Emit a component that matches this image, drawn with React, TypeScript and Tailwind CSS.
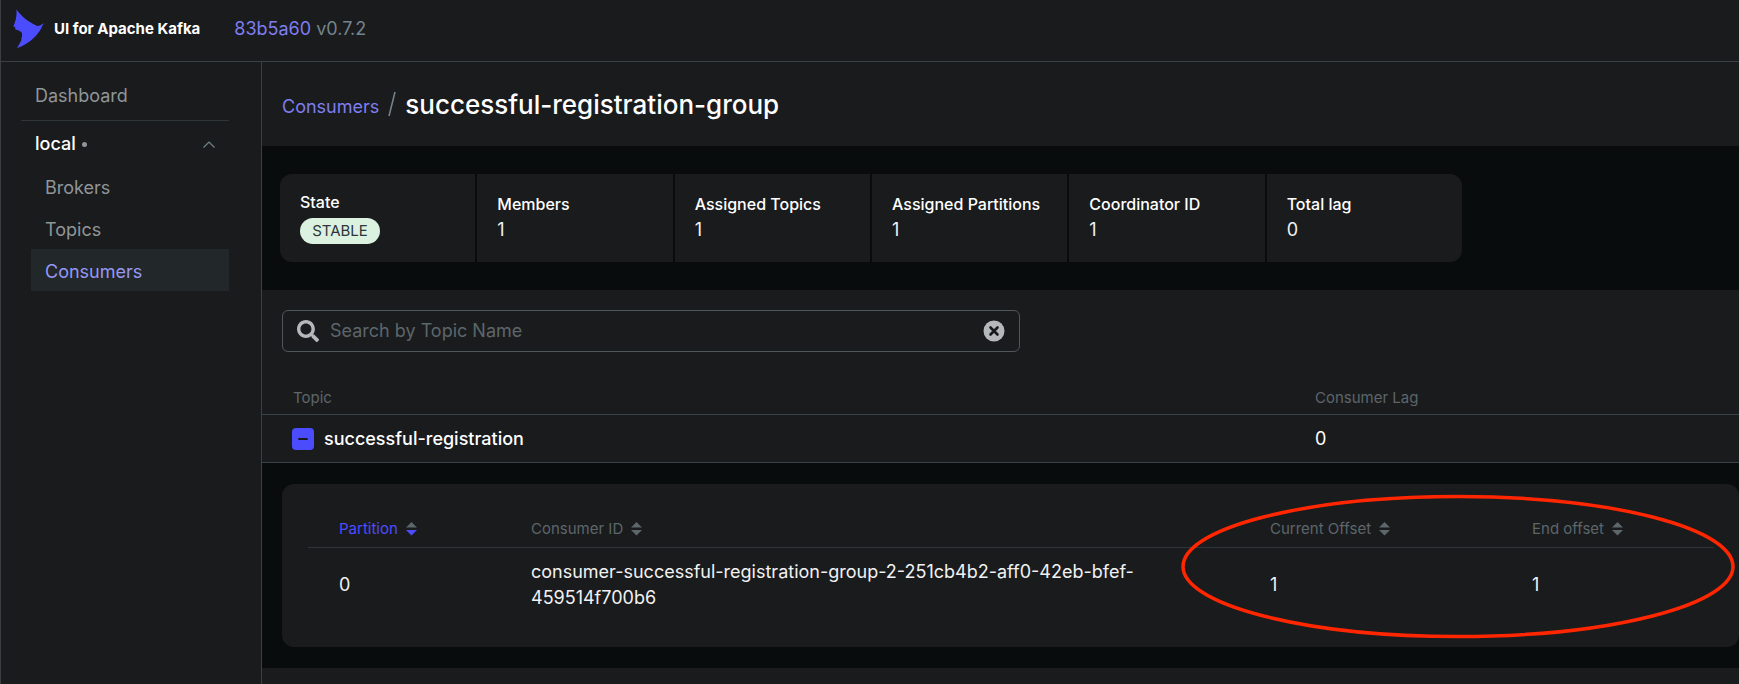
import { useState } from "react";
import clsx from "clsx";

const navItems = ["Brokers", "Topics", "Consumers"];

const metrics = [
  { label: "Members", value: "1" },
  { label: "Assigned Topics", value: "1" },
  { label: "Assigned Partitions", value: "1" },
  { label: "Coordinator ID", value: "1" },
  { label: "Total lag", value: "0" },
];

const partitions = [
  {
    partition: 0,
    consumerId:
      "consumer-successful-registration-group-2-251cb4b2-aff0-42eb-bfef-459514f700b6",
    currentOffset: 1,
    endOffset: 1,
  },
];

function Logo() {
  return (
    <svg width="32" height="40" viewBox="0 0 32 40" aria-hidden="true">
      <path
        d="M3.500 0.500C8 7 16 13.500 24.300 17C27 16.800 29 15.500 31 14C29.500 16.500 28.500 18.500 27 21.500C22 29 14 36 4 39L7.500 33C9 31 7.800 29.500 9 27.500V24C7.500 22 5 21 2.500 20.500L2 18L0.300 17.500C2.500 13 4 7 3.500 0.500Z"
        fill="#4c4cff"
      />
    </svg>
  );
}

function SearchIcon() {
  return (
    <svg width="22" height="22" viewBox="0 0 512 512" fill="#b4b8ba" aria-hidden="true">
      <path d="M505 442.700L405.300 343c-4.500-4.500-10.600-7-17-7H372c27.600-35.300 44-79.700 44-128C416 93.100 322.900 0 208 0S0 93.100 0 208s93.100 208 208 208c48.300 0 92.700-16.400 128-44v16.300c0 6.400 2.500 12.500 7 17l99.700 99.700c9.400 9.400 24.600 9.400 33.900 0l28.300-28.300c9.400-9.400 9.400-24.600.1-34zM208 336c-70.700 0-128-57.200-128-128 0-70.700 57.200-128 128-128 70.700 0 128 57.200 128 128 0 70.700-57.200 128-128 128z" />
    </svg>
  );
}

function ClearIcon() {
  return (
    <svg width="22" height="22" viewBox="0 0 22 22" aria-hidden="true">
      <circle cx="11" cy="11" r="10.500" fill="#b4b8ba" />
      <path d="M7.500 7.500l7 7M14.500 7.500l-7 7" stroke="#171a1c" strokeWidth="2.600" strokeLinecap="round" />
    </svg>
  );
}

interface SortHeaderProps {
  label: string;
  active?: boolean;
}

function SortHeader({ label, active }: SortHeaderProps) {
  return (
    <button
      type="button"
      className={clsx(
        "flex items-center gap-2 whitespace-nowrap",
        active ? "text-[#4c4cff]" : "text-[#5c666b]",
      )}
    >
      {label}
      <svg width="11" height="14" viewBox="0 0 11 14" aria-hidden="true">
        <path d="M5.500 0L11 5.500H0Z" fill="#5c666b" />
        <path d="M0 8H11L5.500 13.500Z" fill={active ? "#4c4cff" : "#5c666b"} />
      </svg>
    </button>
  );
}

function Sidebar() {
  return (
    <aside className="w-[261px] shrink-0 border-r border-[#374146] pt-2 pr-8 pl-5">
      <nav>
        <a
          href="#dashboard"
          className="flex h-[51px] items-center border-b border-[#2f3639] pt-0.5 pl-3.5 text-lg text-[#8f9698]"
        >
          Dashboard
        </a>
        <button
          type="button"
          className="flex h-11 w-full items-center px-3.5 pt-0.5 text-lg font-medium text-white"
        >
          local
          <span className="ml-1.5 size-[5px] rounded-full bg-[#8f9698]" />
          <svg
            className="ml-auto"
            width="12"
            height="7"
            viewBox="0 0 12 7"
            fill="none"
            stroke="#73848c"
            strokeWidth="1.200"
            aria-hidden="true"
          >
            <path d="M0.500 6.500L6 1L11.500 6.500" />
          </svg>
        </button>
        <ul className="ml-2.5">
          {navItems.map((item) => (
            <li key={item}>
              <a
                href={`#${item.toLowerCase()}`}
                className={clsx(
                  "flex h-[42px] items-center pt-1 pl-3.5 text-lg",
                  item === "Consumers"
                    ? "bg-[#22282a] text-[#9797f4]"
                    : "text-[#8f9698]",
                )}
              >
                {item}
              </a>
            </li>
          ))}
        </ul>
      </nav>
    </aside>
  );
}

function Metrics() {
  return (
    <section className="bg-[#090c0d] px-[18px] py-7">
      <dl className="grid max-w-[1182px] grid-cols-6 gap-0.5 overflow-hidden rounded-xl">
        <div className="flex h-[88px] flex-col justify-center bg-[#1a1b1d] px-5">
          <dt className="leading-5 font-medium text-white">State</dt>
          <dd className="mt-1.5 flex h-[26px] w-20 items-center justify-center rounded-full bg-[#dbf2e1] text-[15px] text-[#2f3639]">
            STABLE
          </dd>
        </div>
        {metrics.map(({ label, value }) => (
          <div key={label} className="flex h-[88px] flex-col justify-center bg-[#1a1b1d] px-5">
            <dt className="leading-5 font-medium text-white">{label}</dt>
            <dd className="mt-1 text-lg leading-6 text-[#f1f2f3]">{value}</dd>
          </div>
        ))}
      </dl>
    </section>
  );
}

function PartitionTable() {
  return (
    <div className="relative h-[163px] rounded-xl bg-[#1a1b1d] pt-7 pr-[25px] pl-[26px]">
      <table className="w-full table-fixed text-left">
        <thead>
          <tr className="h-9 border-b border-[#2f3639] text-[15px] [&>th]:pl-[31px] [&>th]:font-normal">
            <th className="w-48">
              <SortHeader label="Partition" active />
            </th>
            <th>
              <SortHeader label="Consumer ID" />
            </th>
            <th className="w-[262px]">
              <SortHeader label="Current Offset" />
            </th>
            <th className="w-[213px]">
              <SortHeader label="End offset" />
            </th>
          </tr>
        </thead>
        <tbody>
          {partitions.map((row) => (
            <tr
              key={row.partition}
              className="h-[74px] text-lg leading-[26px] text-[#f1f2f3] [&>td]:pl-[31px]"
            >
              <td>{row.partition}</td>
              <td className="pr-8">{row.consumerId}</td>
              <td>{row.currentOffset}</td>
              <td>{row.endOffset}</td>
            </tr>
          ))}
        </tbody>
      </table>
      {/* Red marker around the offset columns */}
      <svg
        className="pointer-events-none absolute top-2.5 right-1"
        width="554"
        height="145"
        viewBox="0 0 554 145"
        fill="none"
        aria-hidden="true"
      >
        <ellipse cx="277" cy="72.500" rx="275" ry="70" stroke="#ff2600" strokeWidth="3.500" />
      </svg>
    </div>
  );
}

function TopicsTable() {
  const [open, setOpen] = useState(true);

  return (
    <table className="mt-6 w-full table-fixed text-left">
      <thead>
        <tr className="h-[38px] border-b border-[#374146] text-[15px] text-[#5c666b] [&>th]:pt-1.5 [&>th]:font-normal">
          <th className="pl-[31px]">Topic</th>
          <th className="w-[456px] pl-8">Consumer Lag</th>
        </tr>
      </thead>
      <tbody>
        <tr className="h-12 border-b border-[#374146] text-lg text-white">
          <td className="pt-0.5 pl-[30px]">
            <div className="flex items-center gap-2.5 font-medium">
              <button
                type="button"
                aria-label="Toggle partitions"
                aria-expanded={open}
                onClick={() => setOpen(!open)}
                className="flex size-[22px] items-center justify-center rounded-sm bg-[#4c4cff]"
              >
                <span className="h-0.5 w-2.5 rounded-full bg-[#171a1c]" />
              </button>
              successful-registration
            </div>
          </td>
          <td className="pt-0.5 pl-8">0</td>
        </tr>
        {open && (
          <tr>
            <td colSpan={2} className="bg-[#090c0d] py-[21px] pl-5">
              <PartitionTable />
            </td>
          </tr>
        )}
      </tbody>
    </table>
  );
}

export default function App() {
  const [search, setSearch] = useState("");

  return (
    <div className="flex min-h-screen flex-col border-l border-[#3b3f41] bg-[#1a1b1d] font-['Inter',sans-serif]">
      <header className="flex h-[62px] items-center border-b border-[#374146] pb-[3px] pl-3">
        <Logo />
        <a href="#home" className="ml-[9px] text-[15px] font-bold text-white">
          UI for Apache Kafka
        </a>
        <p className="ml-[34px] text-lg text-[#73848c]">
          <a href="#commit" className="text-[#7e7ef1]">
            83b5a60
          </a>{" "}
          v0.7.2
        </p>
      </header>

      <div className="flex flex-1">
        <Sidebar />
        <main className="min-w-0 flex-1">
          <div className="flex h-[84px] items-center pl-5">
            <a href="#consumers" className="pt-1.5 text-lg text-[#7e7ef1]">
              Consumers
            </a>
            <svg className="mx-[9px]" width="8" height="26" viewBox="0 0 8 26" aria-hidden="true">
              <path d="M1 25L7 1" stroke="#73848c" strokeWidth="1.500" />
            </svg>
            <h1 className="text-[26px] font-medium text-white">successful-registration-group</h1>
          </div>

          <Metrics />

          <div className="px-5 pt-5">
            <label className="flex h-[42px] max-w-[738px] items-center rounded-md border border-[#4f5759] px-3.5">
              <SearchIcon />
              <input
                type="text"
                aria-label="Search by Topic Name"
                placeholder="Search by Topic Name"
                value={search}
                onChange={(e) => setSearch(e.target.value)}
                className="mx-[11px] min-w-0 flex-1 bg-transparent text-lg text-white outline-none placeholder:text-[#5c666b]"
              />
              <button type="button" aria-label="Clear search" onClick={() => setSearch("")}>
                <ClearIcon />
              </button>
            </label>
          </div>

          <TopicsTable />
        </main>
      </div>
    </div>
  );
}
